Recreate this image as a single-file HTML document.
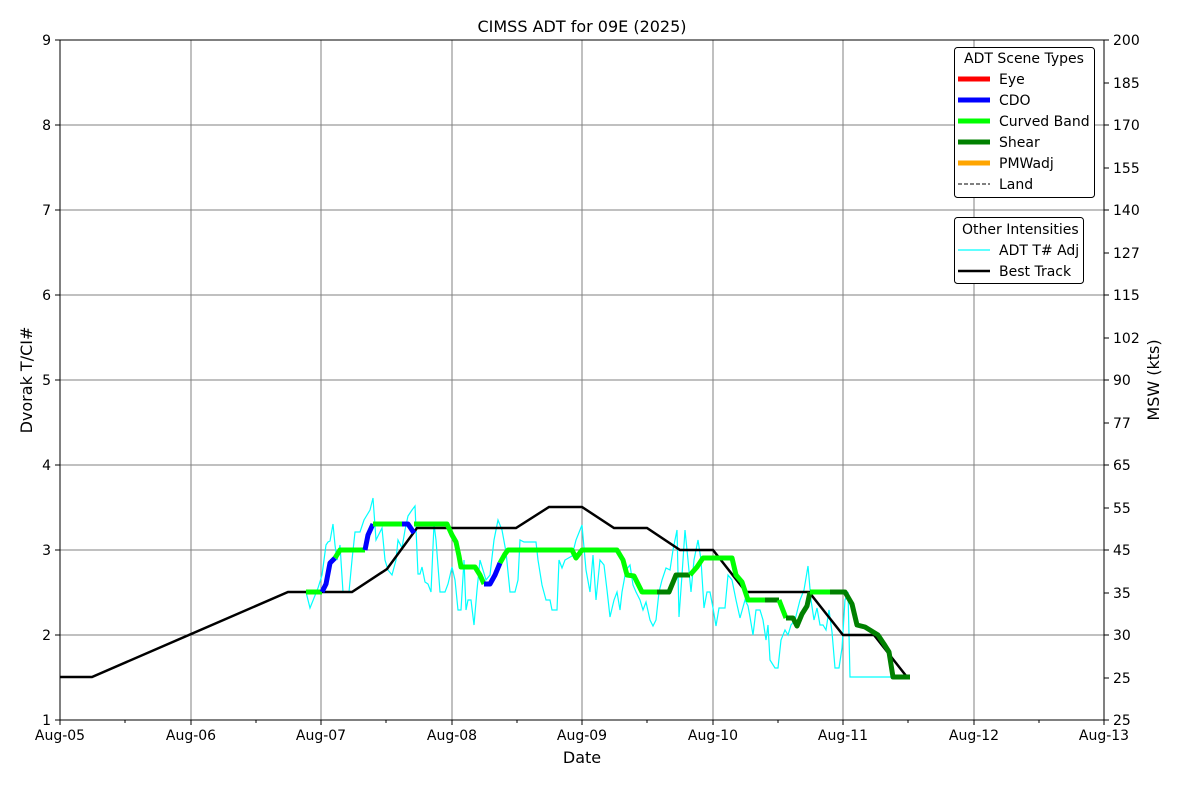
<!DOCTYPE html>
<html><head><style>body{margin:0;background:#fff}svg{display:block}text{font-family:"DejaVu Sans","Liberation Sans",sans-serif;font-size:14px;fill:#000}</style></head>
<body>
<svg width="1200" height="800" viewBox="0 0 1200 800">
<rect width="1200" height="800" fill="#fff"/>
<g stroke="#808080" stroke-width="1">
<line x1="191" y1="40" x2="191" y2="720"/><line x1="321" y1="40" x2="321" y2="720"/><line x1="452" y1="40" x2="452" y2="720"/><line x1="582" y1="40" x2="582" y2="720"/><line x1="713" y1="40" x2="713" y2="720"/><line x1="843" y1="40" x2="843" y2="720"/><line x1="974" y1="40" x2="974" y2="720"/>
<line x1="60" y1="125" x2="1104" y2="125"/><line x1="60" y1="210" x2="1104" y2="210"/><line x1="60" y1="295" x2="1104" y2="295"/><line x1="60" y1="380" x2="1104" y2="380"/><line x1="60" y1="465" x2="1104" y2="465"/><line x1="60" y1="550" x2="1104" y2="550"/><line x1="60" y1="635" x2="1104" y2="635"/>
</g>
<polyline fill="none" stroke="#00ffff" stroke-width="1.2" points="306,592 310,608 314,598 318,588 322,575 326,545 328,542 330,541 333,524 335,545 337,560 340,545 343,592 349,592 352,560 355,532 360,532 364,520 370,510 373,498 376,540 380,532 382,528 385,560 388,570 392,575 396,560 398,540 402,548 405,530 408,516 412,510 415,506 418,574 420,574 422,567 425,582 428,584 431,592 434,524 436,540 440,592 445,592 448,584 452,567 455,580 458,610 461,610 464,560 466,610 468,600 471,600 474,625 477,590 480,560 483,570 486,580 490,575 494,540 498,520 502,530 506,552 510,592 515,592 518,580 520,540 524,542 536,542 538,560 542,585 546,600 550,600 552,610 557,610 559,560 562,568 565,560 572,556 576,540 580,530 582,525 586,570 590,592 593,555 596,600 600,560 604,565 607,590 610,617 614,600 617,592 620,610 622,592 626,570 630,565 633,585 636,592 640,600 643,610 646,602 650,620 653,626 656,620 659,592 662,580 666,568 670,570 673,550 677,530 679,617 682,575 685,530 688,560 691,592 694,560 698,540 701,560 704,608 707,592 710,592 713,608 716,626 719,608 722,608 725,608 728,575 732,580 736,600 740,618 745,600 748,606 750,617 753,635 756,610 760,610 763,620 766,640 768,625 770,660 775,668 778,668 781,640 785,630 788,635 791,625 795,620 800,600 804,590 808,566 811,600 814,620 817,608 820,625 823,625 826,630 829,610 832,632 835,668 839,668 842,648 845,600 848,592 850,677 908,677"/>
<polyline fill="none" stroke="#000" stroke-width="2.5" points="60,677 92,677 288,592 352,592 387,569 417,528 516,528 549,507 582,507 614,528 647,528 680,550 713,550 746,592 809,592 843,635 874,635 907,677"/>
<g fill="none" stroke-width="5" stroke-linejoin="round">
<polyline stroke="#00ff00" points="306,592 322,592"/>
<polyline stroke="#0000ff" points="322,592 326,584 330,563 335,558"/>
<polyline stroke="#00ff00" points="335,558 340,550 365,550"/>
<polyline stroke="#0000ff" points="365,550 368,535 373,524"/>
<polyline stroke="#00ff00" points="373,524 402,524"/>
<polyline stroke="#0000ff" points="402,524 408,524 414,533"/>
<polyline stroke="#00ff00" points="414,524 447,524 452,535 456,542 459,556 461,567 475,567 480,575 484,584"/>
<polyline stroke="#0000ff" points="484,584 490,584 495,575 500,563"/>
<polyline stroke="#00ff00" points="500,563 505,554 508,550 572,550 576,558 582,550 617,550 623,560 627,575 634,576 642,592 657,592"/>
<polyline stroke="#008000" points="657,592 669,592 676,575 690,575"/>
<polyline stroke="#00ff00" points="690,575 697,567 703,558 732,558 736,575 742,582 748,600 765,600"/>
<polyline stroke="#008000" points="765,600 779,600"/>
<polyline stroke="#00ff00" points="779,600 786,618"/>
<polyline stroke="#008000" points="786,618 793,618 797,626 802,614 807,606 810,592"/>
<polyline stroke="#00ff00" points="810,592 830,592"/>
<polyline stroke="#008000" points="830,592 845,592 852,604 857,625 865,627 878,635 884,644 889,652 893,677 910,677"/>
</g>
<rect x="60" y="40" width="1044" height="680" fill="none" stroke="#000" stroke-width="1"/>
<g stroke="#000">
<path d="M60,720v5M191,720v5M321,720v5M452,720v5M582,720v5M713,720v5M843,720v5M974,720v5M1104,720v5M125,720v3M256,720v3M386,720v3M517,720v3M647,720v3M778,720v3M908,720v3M1039,720v3"/>
<path d="M55,40h5M55,125h5M55,210h5M55,295h5M55,380h5M55,465h5M55,550h5M55,635h5M55,720h5"/>
<path d="M1104,40h5M1104,83h5M1104,125h5M1104,168h5M1104,210h5M1104,253h5M1104,295h5M1104,338h5M1104,380h5M1104,423h5M1104,465h5M1104,508h5M1104,550h5M1104,593h5M1104,635h5M1104,678h5M1104,720h5"/>
</g>
<g text-anchor="end">
<text x="51" y="45">9</text><text x="51" y="130">8</text><text x="51" y="215">7</text><text x="51" y="300">6</text><text x="51" y="385">5</text><text x="51" y="470">4</text><text x="51" y="555">3</text><text x="51" y="640">2</text><text x="51" y="725">1</text>
</g>
<g text-anchor="start">
<text x="1113" y="45">200</text><text x="1113" y="88">185</text><text x="1113" y="130">170</text><text x="1113" y="173">155</text><text x="1113" y="215">140</text><text x="1113" y="258">127</text><text x="1113" y="300">115</text><text x="1113" y="343">102</text><text x="1113" y="385">90</text><text x="1113" y="428">77</text><text x="1113" y="470">65</text><text x="1113" y="513">55</text><text x="1113" y="555">45</text><text x="1113" y="598">35</text><text x="1113" y="640">30</text><text x="1113" y="683">25</text><text x="1113" y="725">25</text>
</g>
<g text-anchor="middle">
<text x="60" y="740">Aug-05</text><text x="191" y="740">Aug-06</text><text x="321" y="740">Aug-07</text><text x="452" y="740">Aug-08</text><text x="582" y="740">Aug-09</text><text x="713" y="740">Aug-10</text><text x="843" y="740">Aug-11</text><text x="974" y="740">Aug-12</text><text x="1104" y="740">Aug-13</text>
<text x="582" y="763" style="font-size:16px">Date</text>
<text x="582" y="32" style="font-size:16px">CIMSS ADT for 09E (2025)</text>
<text x="0" y="0" style="font-size:16px" transform="translate(32,380) rotate(-90)">Dvorak T/CI#</text>
<text x="0" y="0" style="font-size:16px" transform="translate(1159,380) rotate(-90)">MSW (kts)</text>
</g>
<rect x="954.5" y="47.5" width="140" height="150" rx="3" fill="#fff" stroke="#000"/>
<text x="964" y="63">ADT Scene Types</text>
<g stroke-width="5"><line x1="958" y1="79" x2="990" y2="79" stroke="#ff0000"/><line x1="958" y1="100" x2="990" y2="100" stroke="#0000ff"/><line x1="958" y1="121" x2="990" y2="121" stroke="#00ff00"/><line x1="958" y1="142" x2="990" y2="142" stroke="#008000"/><line x1="958" y1="163" x2="990" y2="163" stroke="#ffa500"/></g>
<line x1="958" y1="184" x2="990" y2="184" stroke="#000" stroke-dasharray="4,2"/>
<text x="999" y="84">Eye</text><text x="999" y="105">CDO</text><text x="999" y="126">Curved Band</text><text x="999" y="147">Shear</text><text x="999" y="168">PMWadj</text><text x="999" y="189">Land</text>
<rect x="954.5" y="217.5" width="129" height="66" rx="3" fill="#fff" stroke="#000"/>
<text x="962" y="234">Other Intensities</text>
<line x1="958" y1="250" x2="990" y2="250" stroke="#00ffff" stroke-width="1.2"/>
<line x1="958" y1="271" x2="990" y2="271" stroke="#000" stroke-width="2.5"/>
<text x="999" y="255">ADT T# Adj</text><text x="999" y="276">Best Track</text>
</svg>
</body></html>
